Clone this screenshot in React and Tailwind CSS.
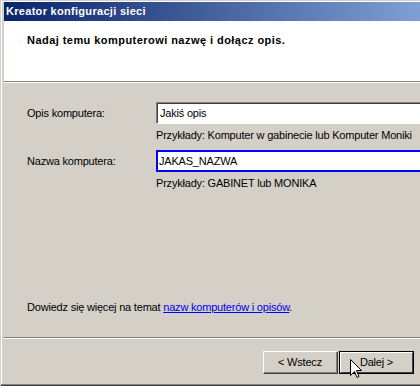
export default function App() {
  const font = { fontFamily: '"Liberation Sans", Arial, sans-serif' };
  return (
    <div className="relative w-[420px] h-[386px] overflow-hidden bg-[#d4d0c8] text-[11px] tracking-[-0.2px] text-black whitespace-nowrap" style={font}>
      <div className="flex flex-col h-full pt-[1px] pl-[1px]">
        <div className="flex flex-col flex-1 border-l border-t border-white pl-[1px]">
          {/* title bar */}
          <div className="h-[19px] ml-[1px] flex items-center pl-[2px] bg-[linear-gradient(to_right,#0a246a,#7f9fd4)]">
            <span className="text-white font-bold text-[11px] tracking-[0.3px] leading-none">Kreator konfiguracji sieci</span>
          </div>

          {/* header */}
          <div className="h-[60px] ml-[1px] bg-white pl-[23px] pt-[11px]">
            <span className="font-bold text-[11px] tracking-[0.45px]">Nadaj temu komputerowi nazwę i dołącz opis.</span>
          </div>
          <div className="ml-[1px] border-t border-[#808080] border-b border-b-white" />

          {/* body */}
          <div className="flex-1 ml-[1px] flex flex-col pl-[23px] pt-[19px]">
            <div className="flex items-center h-[22px]">
              <span className="w-[129px] shrink-0">Opis komputera:</span>
              <div className="h-[22px] w-[300px] shrink-0 border-t border-l border-[#808080] border-b border-r border-b-white border-r-white">
                <div className="h-full border-t border-l border-[#404040] bg-white pl-[2px] flex items-center">
                  Jakiś opis
                </div>
              </div>
            </div>
            <div className="pl-[129px] pt-[3px] h-[17px]">Przykłady: Komputer w gabinecie lub Komputer Moniki</div>
            <div className="flex items-center h-[22px] mt-[9px]">
              <span className="w-[129px] shrink-0">Nazwa komputera:</span>
              <div className="h-[22px] w-[300px] shrink-0 border-2 border-[#0000ff] bg-white pl-[1px] flex items-center">
                JAKAS_NAZWA
              </div>
            </div>
            <div className="pl-[129px] pt-[3px]">Przykłady: GABINET lub MONIKA</div>

            <div className="mt-auto pb-[22px]">
              Dowiedz się więcej na temat{' '}
              <span className="text-[#0000ee] underline">nazw komputerów i opisów</span>.
            </div>
          </div>

          <div className="ml-[1px] border-t border-[#808080] border-b border-b-white" />

          {/* buttons */}
          <div className="h-[45px] ml-[1px] flex justify-end items-start pt-[12px] pr-[6px] gap-[1px]">
            <button className="w-[75px] h-[23px] border-t border-l border-white border-b border-r border-b-[#404040] border-r-[#404040]">
              <div className="h-full w-full border-b border-r border-[#808080] flex items-center justify-center">
                &lt; Wstecz
              </div>
            </button>
            <button className="w-[75px] h-[23px] border border-black">
              <div className="h-full w-full border-t border-l border-white border-b border-r border-b-[#404040] border-r-[#404040] flex items-center justify-center">
                Dalej &gt;
              </div>
            </button>
          </div>
        </div>
        <div className="border-t border-[#808080] border-b border-b-[#404040] h-[2px]" />
      </div>

      {/* mouse cursor */}
      <svg className="absolute left-[350px] top-[359px]" width="12" height="20" viewBox="0 0 12 20">
        <path d="M0.5 0.5 L0.5 16.5 L4.5 12.5 L7 18.5 L9 17.5 L6.5 11.5 L11.5 11.5 Z" fill="white" stroke="black" strokeWidth="1" />
      </svg>
    </div>
  );
}
